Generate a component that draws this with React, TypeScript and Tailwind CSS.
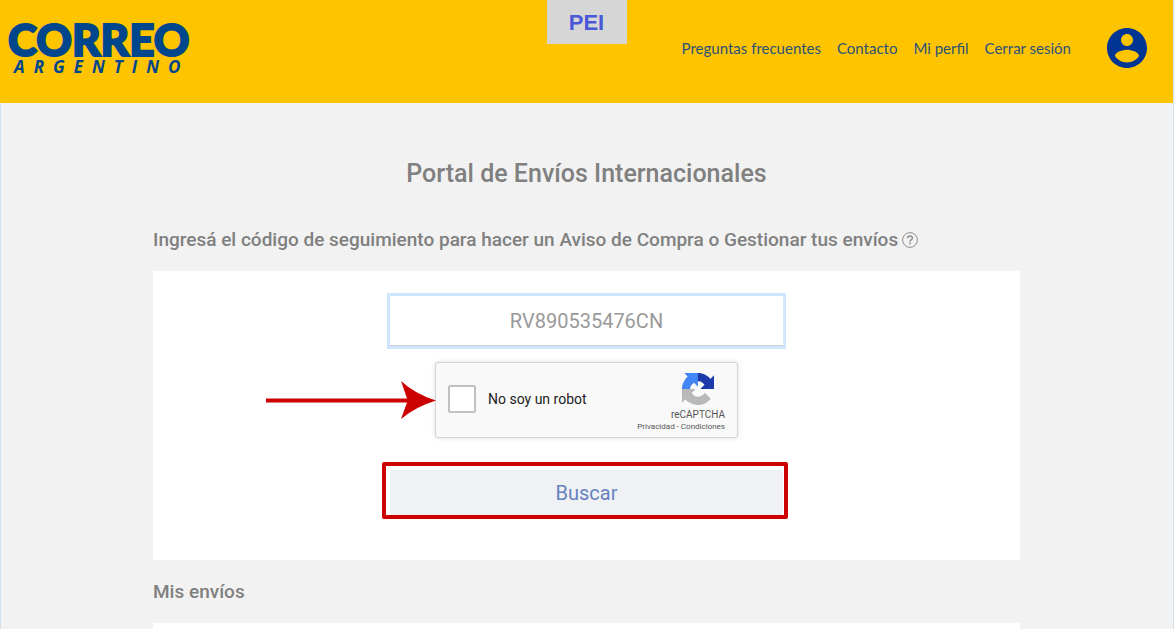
import React from "react";

const links = ["Preguntas frecuentes", "Contacto", "Mi perfil", "Cerrar sesión"];

function Logo() {
  return (
    <a href="#inicio" aria-label="Correo Argentino" className="flex flex-col gap-1 text-[#00468c]">
      <span className="font-[Lato,sans-serif] text-[44px] leading-8 font-black [-webkit-text-stroke:2px_#00468c]">
        CORREO
      </span>
      <span className="pl-[6px] font-['Open_Sans',sans-serif] text-[17px] leading-4 font-bold tracking-[9px] italic">
        ARGENTINO
      </span>
    </a>
  );
}

function UserIcon() {
  return (
    <svg viewBox="2 2 20 20" className="size-10 fill-[#003594]" aria-hidden="true">
      <path d="M12 2C6.48 2 2 6.48 2 12s4.48 10 10 10 10-4.48 10-10S17.52 2 12 2zm0 3c1.66 0 3 1.34 3 3s-1.34 3-3 3-3-1.34-3-3 1.34-3 3-3zm0 14.2c-2.5 0-4.71-1.28-6-3.22.03-1.99 4-3.08 6-3.08 1.99 0 5.97 1.09 6 3.08-1.29 1.94-3.5 3.22-6 3.22z" />
    </svg>
  );
}

function HelpIcon() {
  return (
    <svg viewBox="0 0 16 16" className="size-4" fill="none" stroke="#8f8f8f" aria-hidden="true">
      <circle cx="8" cy="8" r="7.4" strokeWidth="1" />
      <path d="M5.6 6.2c0-1.4 1-2.3 2.4-2.3s2.4.9 2.4 2.2c0 1.7-2.3 1.7-2.3 3.4" strokeWidth="1.5" />
      <path d="M8.1 10.6v1.6" strokeWidth="1.6" />
    </svg>
  );
}

function RecaptchaLogo() {
  return (
    <svg viewBox="0 0 64 64" className="size-8" aria-hidden="true">
      <path
        fill="#1c3aa9"
        d="M64 31.955l-.033-1.37V4.687l-7.16 7.16C50.948 4.674 42.033.093 32.05.093c-10.4 0-19.622 4.96-25.458 12.64l11.736 11.86a15.55 15.55 0 0 1 4.754-5.334c2.05-1.6 4.952-2.906 8.968-2.906.485 0 .86.057 1.135.163 4.976.393 9.288 3.14 11.828 7.124l-8.307 8.307L64 31.953"
      />
      <path
        fill="#4285f4"
        d="M31.862.094l-1.37.033H4.594l7.16 7.16C4.58 13.147 0 22.06 0 32.046c0 10.4 4.96 19.622 12.64 25.458L24.5 45.768a15.55 15.55 0 0 1-5.334-4.754c-1.6-2.05-2.906-4.952-2.906-8.968 0-.485.057-.86.163-1.135.393-4.976 3.14-9.288 7.124-11.828l8.307 8.307L31.86.095"
      />
      <path
        fill="#b8b8b8"
        d="M.001 32.045l.033 1.37v25.898l7.16-7.16c5.86 7.173 14.774 11.754 24.76 11.754 10.4 0 19.622-4.96 25.458-12.64l-11.736-11.86a15.55 15.55 0 0 1-4.754 5.334c-2.05 1.6-4.952 2.906-8.968 2.906-.485 0-.86-.057-1.135-.163-4.976-.393-9.288-3.14-11.828-7.124l8.307-8.307L.001 32.046"
      />
    </svg>
  );
}

export default function App() {
  return (
    <div className="flex min-h-screen flex-col border-r border-[#cfdfec] bg-[#f2f2f2] font-[Roboto,sans-serif] text-[#808080] shadow-[inset_1px_0_#d5e3ee]">
      <header className="relative flex items-start justify-between bg-[#ffc400] pt-[23px] pr-[26px] pb-[28px] pl-2">
        <Logo />
        <div className="absolute top-0 left-1/2 flex h-11 w-20 -translate-x-1/2 items-center justify-center bg-[#d6d6d6] font-['Liberation_Sans',sans-serif] text-[22px] font-bold text-[#4b58d8]">
          PEI
        </div>
        <nav className="flex items-center gap-4 pt-[5px] font-[Lato,sans-serif] text-[15px] text-[#2b5278]">
          {links.map((label) => (
            <a key={label} href="#seccion">
              {label}
            </a>
          ))}
          <a href="#perfil" aria-label="Mi cuenta" className="pl-5">
            <UserIcon />
          </a>
        </nav>
      </header>

      <main className="mx-auto flex w-full max-w-[867px] flex-1 flex-col">
        <h1 className="pt-[55px] text-center text-[25px] leading-8 font-medium">Portal de Envíos Internacionales</h1>
        <h2 className="flex items-center gap-1 pt-[38px] text-[19px] leading-6 font-medium">
          <label htmlFor="codigo">Ingresá el código de seguimiento para hacer un Aviso de Compra o Gestionar tus envíos</label>
          <button type="button" aria-label="Ayuda">
            <HelpIcon />
          </button>
        </h2>

        <section className="mt-[19px] bg-white pt-[25px] pb-[44px]">
          <form className="mx-auto flex max-w-[393px] flex-col items-center" onSubmit={(e) => e.preventDefault()}>
            <input
              id="codigo"
              type="text"
              defaultValue="RV890535476CN"
              className="h-[50px] w-full border-b border-[#cccccc] bg-white text-center text-[20px] text-[#999999] ring-3 ring-[#d0e6ff] outline-none"
            />

            <div className="relative mt-4 flex h-[76px] w-full max-w-[303px] items-center justify-between rounded-[3px] border border-[#d3d3d3] bg-[#f9f9f9] px-3 shadow-[0_0_4px_1px_rgba(0,0,0,0.08)]">
              <svg
                viewBox="0 0 170 38"
                className="absolute top-[18px] right-full h-[38px] w-[170px] fill-[#cc0000]"
                aria-hidden="true"
              >
                <path d="M0 17.5h141L135 0Q149 13 170 19.500Q149 26 135 38L141 21.500H0z" />
              </svg>
              <div className="flex items-center gap-3 pb-[2px]">
                <input
                  id="robot"
                  type="checkbox"
                  className="size-7 appearance-none rounded-[2px] border-2 border-[#c1c1c1] bg-white"
                />
                <label htmlFor="robot" className="text-[14px] text-[#222222]">
                  No soy un robot
                </label>
              </div>
              <div className="flex flex-col items-end pt-[6px] text-[#555555]">
                <span className="pr-[11px]">
                  <RecaptchaLogo />
                </span>
                <span className="pt-1 text-[10px] leading-3">reCAPTCHA</span>
                <span className="text-[8px] leading-3">
                  <a href="#privacidad">Privacidad</a> - <a href="#condiciones">Condiciones</a>
                </span>
              </div>
            </div>

            <div className="relative mt-8 w-full">
              <button type="submit" className="h-[46px] w-full rounded-[2px] bg-[#eff1f4] text-[20px] text-[#6583c0]">
                Buscar
              </button>
              <div className="pointer-events-none absolute -top-2 -right-[5px] -bottom-[3px] -left-2 rounded-[2px] border-4 border-[#cc0000]" />
            </div>
          </form>
        </section>

        <h2 className="pt-5 text-[19px] leading-6 font-medium">Mis envíos</h2>
        <section className="mt-[19px] flex-1 bg-white" />
      </main>
    </div>
  );
}
